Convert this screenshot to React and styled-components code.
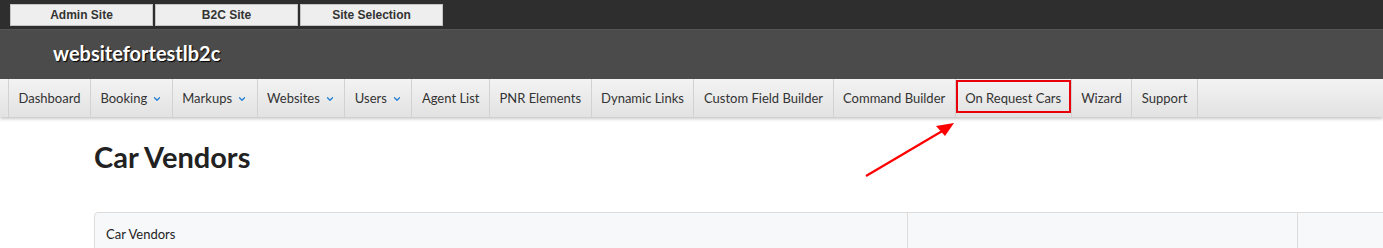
import styled, { createGlobalStyle } from "styled-components";
import { ChevronDown } from "lucide-react";

const GlobalStyle = createGlobalStyle`
  body {
    margin: 0;
    background: #fff;
    font-family: Lato, "Liberation Sans", sans-serif;
    overflow: hidden;
  }
`;

const menu = [
  { label: "Dashboard" },
  { label: "Booking", drop: true },
  { label: "Markups", drop: true },
  { label: "Websites", drop: true },
  { label: "Users", drop: true },
  { label: "Agent List" },
  { label: "PNR Elements" },
  { label: "Dynamic Links" },
  { label: "Custom Field Builder" },
  { label: "Command Builder" },
  { label: "On Request Cars", marked: true },
  { label: "Wizard" },
  { label: "Support" },
];

const Page = styled.div`
  position: relative;
  width: 1383px;
  height: 248px;
  overflow: hidden;
`;

const TopBar = styled.div`
  background: #2e2e2e;
  height: 29px;
  padding: 4px 0 0 10px;
  box-sizing: border-box;
  display: flex;
  gap: 2px;
`;

const SiteButton = styled.button`
  width: 143px;
  height: 22px;
  background: #eeeeee;
  border: 1px solid #c4c4c4;
  font-family: "Liberation Sans", Arial, sans-serif;
  font-weight: bold;
  font-size: 12px;
  color: #333;
  padding: 0;
`;

const Header = styled.div`
  background: #4b4b4b;
  height: 50px;
  display: flex;
  align-items: center;
  padding-left: 53px;
  border-top: 1px solid #555;
  box-sizing: border-box;
`;

const SiteName = styled.h2`
  margin: 0 0 4px;
  font-family: Lato, sans-serif;
  font-size: 20px;
  font-weight: 700;
  color: #fff;
  text-shadow: 1px 1px 1px #000;
`;

const NavBar = styled.nav`
  height: 38px;
  background: linear-gradient(#f3f3f3, #e2e2e2);
  box-shadow: 0 2px 3px rgba(0, 0, 0, 0.22);
  padding-left: 8px;
  display: flex;
`;

const NavItem = styled.div`
  display: flex;
  align-items: center;
  gap: 5px;
  padding: 0 9.5px;
  border-left: 1px solid #d2d2d2;
  font-size: 13px;
  color: #333;
  white-space: nowrap;
  position: relative;
  &:last-child {
    border-right: 1px solid #d2d2d2;
  }
  ${(p) =>
    p.$marked &&
    `
    &::after {
      content: "";
      position: absolute;
      left: 0;
      top: 1px;
      right: 0;
      bottom: 4px;
      border: 2px solid #e8000b;
    }
  `}
`;

const Caret = styled(ChevronDown)`
  color: #1e7fd6;
  margin-top: 2px;
`;

const Content = styled.div`
  padding: 22px 0 0 94px;
`;

const Title = styled.h1`
  margin: 0;
  font-size: 29px;
  font-weight: 700;
  color: #222;
  line-height: 36px;
`;

const Panel = styled.div`
  margin-top: 37px;
  width: 1320px;
  border: 1px solid #dcdcdc;
  border-radius: 4px;
  background: #f7f8fa;
  display: grid;
  grid-template-columns: 812px 390px 1fr;
  height: 60px;
`;

const PanelCell = styled.div`
  padding: 13px 11px;
  font-size: 13px;
  color: #222;
  & + & {
    border-left: 1px solid #dcdcdc;
  }
`;

const Arrow = styled.svg`
  position: absolute;
  left: 860px;
  top: 118px;
`;

export default function App() {
  return (
    <Page>
      <GlobalStyle />
      <TopBar>
        <SiteButton>Admin Site</SiteButton>
        <SiteButton>B2C Site</SiteButton>
        <SiteButton>Site Selection</SiteButton>
      </TopBar>
      <Header>
        <SiteName>websitefortestlb2c</SiteName>
      </Header>
      <NavBar>
        {menu.map((m) => (
          <NavItem key={m.label} $marked={m.marked}>
            {m.label}
            {m.drop && <Caret size={10} strokeWidth={3} />}
          </NavItem>
        ))}
      </NavBar>
      <Content>
        <Title>Car Vendors</Title>
        <Panel>
          <PanelCell>Car Vendors</PanelCell>
          <PanelCell />
          <PanelCell />
        </Panel>
      </Content>
      <Arrow width="100" height="64" viewBox="0 0 100 64">
        <line x1="6" y1="58" x2="84" y2="12" stroke="#f00" strokeWidth="2.2" />
        <polygon points="94,5 76,8 85,18" fill="#f00" />
      </Arrow>
    </Page>
  );
}
